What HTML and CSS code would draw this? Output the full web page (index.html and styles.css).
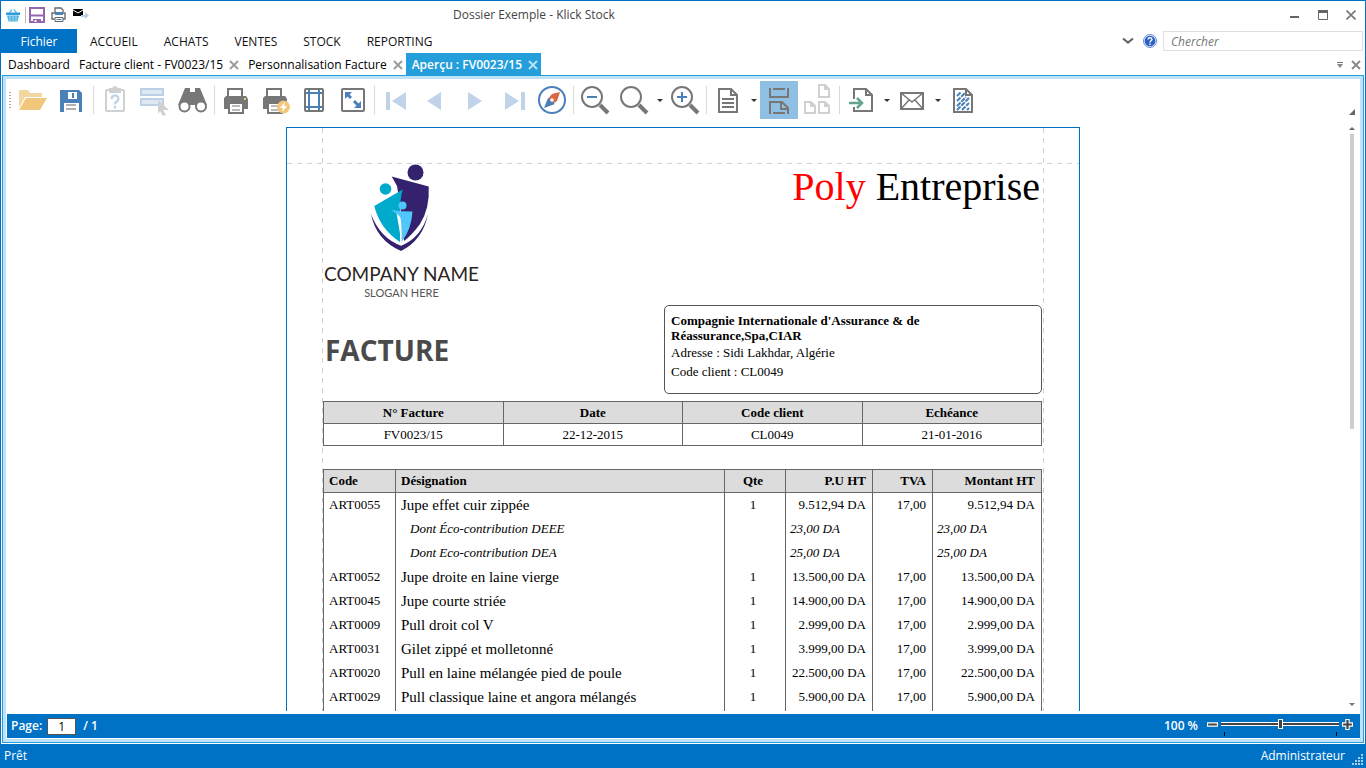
FILE: index.html
```html
<!DOCTYPE html>
<html lang="fr">
<head>
<meta charset="utf-8">
<title>Dossier Exemple - Klick Stock</title>
<link rel="stylesheet" href="styles.css">
</head>
<body>
<div class="window">
  <header class="titlebar">
    <div class="quick">
      <svg class="i14" viewBox="0 0 14 14"><path d="M3.500 5 6 1.500M10.500 5 8 1.500" stroke="#7fc4e8" stroke-width="1.500" fill="none"/><path d="M0 4.500h14V7H0z" fill="#2a9fdb"/><path d="M1 7.500h12l-1.500 6h-9z" fill="#4fb3e2"/><path d="M4 8v5M7 8v5M10 8v5" stroke="#a8d8f0"/></svg>
      <span class="bar"></span>
      <button class="qbtn" aria-label="Enregistrer"><svg class="i16" viewBox="0 0 16 16"><path d="M1 1h14v14H1z" fill="#fff" stroke="#9466ad" stroke-width="2"/><path d="M1 8.500h14" stroke="#9466ad" stroke-width="2"/><path d="M4 12h8v4H4z" fill="#9466ad"/><path d="M5.500 13h2v2h-2z" fill="#fff"/></svg></button>
      <button class="qbtn" aria-label="Imprimer"><svg class="i16" viewBox="0 0 16 16"><path d="M4 5V1h6l2 2v2M3.500 12H1V6h13v6h-2" fill="none" stroke="#666" stroke-width="1.300"/><path d="M4 5h8v3H4z" fill="#4d82b8"/><path d="M4 10.500h8v4H4z" fill="#fff" stroke="#666"/><path d="M5.500 12.500h5" stroke="#4d82b8"/></svg></button>
      <button class="qbtn" aria-label="Envoyer"><svg class="i16" viewBox="0 0 16 16"><path d="M0 2h10v7H0z" fill="#000"/><path d="m0 3 5 3 5-3" stroke="#fff" fill="none"/><path d="M8 8h4V5l4 3.500-4 3.500V10H8z" fill="#b9cfe8"/></svg></button>
    </div>
    <div class="title">Dossier Exemple - Klick Stock</div>
    <div class="winbtns">
      <button aria-label="Réduire"><svg viewBox="0 0 10 10"><path d="M0 7h9" stroke="#666" stroke-width="2"/></svg></button>
      <button aria-label="Agrandir"><svg viewBox="0 0 10 10"><path d="M.5 1v8.500h9V1" fill="none" stroke="#666"/><path d="M0 1.500h10" stroke="#666" stroke-width="3"/></svg></button>
      <button aria-label="Fermer"><svg viewBox="0 0 10 10"><path d="m.5.5 9 9m0-9-9 9" stroke="#777" stroke-width="1.600"/></svg></button>
    </div>
  </header>
  <nav class="menu">
    <button class="file">Fichier</button>
    <div class="items">
      <button>ACCUEIL</button><button>ACHATS</button><button>VENTES</button><button>STOCK</button><button>REPORTING</button>
    </div>
    <div class="search">
      <button aria-label="Réduire le ruban"><svg class="chev" viewBox="0 0 12 8"><path d="m1 1.500 5 4 5-4" fill="none" stroke="#666" stroke-width="2.200"/></svg></button>
      <button aria-label="Aide"><svg class="i14" viewBox="0 0 14 14"><circle cx="7" cy="7" r="6.500" fill="#e3ebf8" stroke="#6d8fd0"/><circle cx="7" cy="7" r="5.300" fill="#2a5fc4"/><path d="M5 5.500Q5.200 3.700 7 3.700T9 5.300Q9 6.300 7.800 7 7 7.500 7 8.500M7 9.500v1.500" stroke="#fff" stroke-width="1.400" fill="none"/></svg></button>
      <input type="text" placeholder="Chercher" aria-label="Chercher">
    </div>
  </nav>
  <div class="tabs">
    <div class="tab"><button>Dashboard</button></div>
    <div class="tab"><button>Facture client - FV0023/15</button><button class="x" aria-label="Fermer l'onglet"><svg viewBox="0 0 10 10"><path d="m1 1 8 8m0-8L1 9" stroke="currentColor" stroke-width="1.800"/></svg></button></div>
    <div class="tab"><button>Personnalisation Facture</button><button class="x" aria-label="Fermer l'onglet"><svg viewBox="0 0 10 10"><path d="m1 1 8 8m0-8L1 9" stroke="currentColor" stroke-width="1.800"/></svg></button></div>
    <div class="tab active"><button>Aperçu : FV0023/15</button><button class="x" aria-label="Fermer l'onglet"><svg viewBox="0 0 10 10"><path d="m1 1 8 8m0-8L1 9" stroke="currentColor" stroke-width="1.800"/></svg></button></div>
    <div class="tabtools">
      <button class="x" aria-label="Liste des onglets"><svg viewBox="0 0 10 10"><path d="M2 2.500h6" stroke="#777"/><path d="M2 4h6L5 8z" fill="#888"/></svg></button>
      <button class="x" aria-label="Fermer"><svg viewBox="0 0 10 10"><path d="m1 1 8 8m0-8L1 9" stroke="#888" stroke-width="1.800"/></svg></button>
    </div>
  </div>
  <main class="frame">
    <div class="toolbar">
      <span class="grip"></span>
      <button class="tb" aria-label="Ouvrir"><svg viewBox="0 0 32 32"><path d="M3 6h9l2 3h12v4H9L3 24z" fill="#f4d6a0"/><path d="M10 14h21l-7 12H3z" fill="#f0c77b"/></svg></button>
      <button class="tb" aria-label="Enregistrer"><svg viewBox="0 0 32 32"><path d="M5 6h19l3 3v19H5z" fill="#4a80b8"/><path d="M13 8h9v7h-9zM9 19h15v9H9z" fill="#fff"/><path d="M17 9h2v5h-2z" fill="#4a80b8"/><path d="M11 21h10M11 25h10" stroke="#b0b0b0" stroke-width="2"/></svg></button>
      <span class="sep"></span>
      <button class="tb" aria-label="Paramètres"><svg viewBox="0 0 32 32"><rect x="8" y="6" width="18" height="21" rx="1" fill="none" stroke="#d0d0d0" stroke-width="2"/><path d="M11 4h3q3-4 6 0h3v5H11z" fill="#d0d0d0"/><path d="M13.500 15q.5-3.500 3.500-3.500t3.500 3q0 2-2 3.200T17 20.500M17 22v2.500" fill="none" stroke="#bcd0e6" stroke-width="2.200"/></svg></button>
      <button class="tb" aria-label="Sélection"><svg viewBox="0 0 32 32"><path d="M4 5h22v6H4zM4 15h22v6H4z" fill="#dfe9f4" stroke="#bcd0e6" stroke-width="2"/><path d="m21 16 11 10h-6l3 5-3 1-3-5-2 3z" fill="#d0d0d0"/></svg></button>
      <button class="tb" aria-label="Rechercher"><svg viewBox="0 0 32 32"><path d="M9 4h5v4h5V4h5l7 17H2z" fill="#777"/><path d="M13 20h7v-5h-7z" fill="#777"/><circle cx="8.500" cy="22.500" r="5" fill="#fff" stroke="#777" stroke-width="2"/><circle cx="25" cy="22.500" r="5" fill="#fff" stroke="#777" stroke-width="2"/></svg></button>
      <span class="sep"></span>
      <button class="tb" aria-label="Imprimer"><svg viewBox="0 0 32 32"><path d="M9 12V5h14v7" fill="none" stroke="#777" stroke-width="2"/><path d="M7 12h20l2 3v10H5V14z" fill="#777"/><path d="M25 14h2v2h-2z" fill="#f0c77b"/><path d="M10 19h14v10H10z" fill="#fff" stroke="#777" stroke-width="2"/><path d="M13 22h8M13 26h8" stroke="#bbb" stroke-width="2"/></svg></button>
      <button class="tb" aria-label="Impression rapide"><svg viewBox="0 0 32 32"><path d="M9 12V5h14v7" fill="none" stroke="#777" stroke-width="2"/><path d="M7 12h20l2 3v10H5V14z" fill="#777"/><path d="M10 19h14v10H10z" fill="#fff" stroke="#777" stroke-width="2"/><path d="M13 22h8M13 26h8" stroke="#bbb" stroke-width="2"/><circle cx="25.500" cy="23" r="6.500" fill="#f0c77b"/><path d="m27 18-5 6h3l-1 4 5-6h-3z" fill="#fff"/></svg></button>
      <button class="tb" aria-label="Marges"><svg viewBox="0 0 32 32"><rect x="8" y="5" width="18" height="22" rx="1" fill="none" stroke="#777" stroke-width="2"/><path d="M12 6v20M22 6v20M9 9h16M9 23h16" stroke="#4a80b8" stroke-width="2"/></svg></button>
      <button class="tb" aria-label="Échelle"><svg viewBox="0 0 32 32"><rect x="6" y="5" width="22" height="22" rx="1" fill="none" stroke="#777" stroke-width="2"/><path d="m10 9 5 5M18 17l5 5" stroke="#4a80b8" stroke-width="3"/><path d="M9 8h7l-7 7zM25 24h-7l7-7z" fill="#4a80b8"/></svg></button>
      <span class="sep"></span>
      <button class="tb" aria-label="Première page"><svg viewBox="0 0 32 32"><path d="M7 8h4v18H7zM27 8v18l-14-9z" fill="#c0d3e8"/></svg></button>
      <button class="tb" aria-label="Page précédente"><svg viewBox="0 0 32 32"><path d="M23 8v18L9 17z" fill="#c0d3e8"/></svg></button>
      <button class="tb" aria-label="Page suivante"><svg viewBox="0 0 32 32"><path d="M11 8v18l14-9z" fill="#c0d3e8"/></svg></button>
      <button class="tb" aria-label="Dernière page"><svg viewBox="0 0 32 32"><path d="M9 8v18l14-9zM25 8h4v18h-4z" fill="#c0d3e8"/></svg></button>
      <button class="tb" aria-label="Navigation"><svg viewBox="0 0 32 32"><circle cx="17" cy="16" r="13" fill="#fff" stroke="#4a80b8" stroke-width="2"/><path d="m25 8-3 9-5 3-4-5 4-5z" fill="#db6544"/><path d="m9 24 4-10 7 6z" fill="#4a80b8"/><circle cx="17" cy="16" r="1.800" fill="#fff"/></svg></button>
      <span class="sep"></span>
      <button class="tb" aria-label="Zoom arrière"><svg viewBox="0 0 32 32"><circle cx="14" cy="13" r="10" fill="none" stroke="#777" stroke-width="2"/><path d="m22 21 8 8" stroke="#777" stroke-width="4"/><path d="M9 13h10" stroke="#4a80b8" stroke-width="2"/></svg></button>
      <button class="tb" aria-label="Zoom"><svg viewBox="0 0 32 32"><circle cx="14" cy="13" r="10" fill="none" stroke="#777" stroke-width="2"/><path d="m22 21 8 8" stroke="#777" stroke-width="4"/></svg></button>
      <button class="caret" aria-label="Niveaux de zoom"></button>
      <button class="tb" aria-label="Zoom avant"><svg viewBox="0 0 32 32"><circle cx="14" cy="13" r="10" fill="none" stroke="#777" stroke-width="2"/><path d="m22 21 8 8" stroke="#777" stroke-width="4"/><path d="M9 13h10M14 8v10" stroke="#4a80b8" stroke-width="2"/></svg></button>
      <span class="sep"></span>
      <button class="tb" aria-label="Affichage"><svg viewBox="0 0 32 32"><path d="M8 5h12l6 6v17H8zM20 5v6h6" fill="none" stroke="#777" stroke-width="2"/><path d="M11 15h12M11 19h12M11 23h12" stroke="#777" stroke-width="2"/></svg></button>
      <button class="caret" aria-label="Options d'affichage"></button>
      <button class="tb on" aria-label="Défilement continu"><svg viewBox="0 0 32 32"><path d="M8 4v9h18V4M11 5h12M8 30V18h12l6 6v6M19 18v7h7M11 29h12" fill="none" stroke="#777" stroke-width="2"/></svg></button>
      <button class="tb" aria-label="Plusieurs pages"><svg viewBox="0 0 32 32"><path d="M18 1h6l4 4v8H18zM24 1v4h4M4 18h6l4 4v7H4zM10 18v4h4M18 18h6l4 4v7H18zM24 18v4h4" fill="none" stroke="#d0d0d0" stroke-width="2"/></svg></button>
      <span class="sep"></span>
      <button class="tb" aria-label="Exporter"><svg viewBox="0 0 32 32"><path d="M10 15V5h12l6 6v16H10v-4M22 5v6h6" fill="none" stroke="#777" stroke-width="2"/><path d="M5 19h12M13 14l5 5-5 5" fill="none" stroke="#63a68d" stroke-width="2.500"/></svg></button>
      <button class="caret" aria-label="Formats d'export"></button>
      <button class="tb" aria-label="Envoyer par e-mail"><svg viewBox="0 0 32 32"><path d="M6 9h22v16H6z" fill="none" stroke="#777" stroke-width="2"/><path d="m6 9 11 9 11-9M6 25l8-9M28 25l-8-9" fill="none" stroke="#777" stroke-width="1.500"/></svg></button>
      <button class="caret" aria-label="Formats d'envoi"></button>
      <button class="tb" aria-label="Filigrane"><svg viewBox="0 0 32 32"><path d="M8 5h12l6 6v17H8zM20 5v6h6" fill="none" stroke="#777" stroke-width="2"/><path d="m11 12 4-4M11 17l8-8M11 22l9-9M11 26l12-12M16 26l7-7M21 26l2-2" stroke="#4a80b8" stroke-width="2" stroke-dasharray="5 1"/></svg></button>
      <span class="corner"></span>
    </div>
    <div class="viewer">
      <article class="page">
        <div class="head">
          <div class="logo">
            <svg viewBox="0 0 60 88"><circle cx="44.500" cy="8.500" r="8" fill="#35226f"/><path d="M20.700 12.500 57.700 22.500Q59 44 49 60 41 71 33 77L29 40 26 22Z" fill="#35226f"/><path d="m3.300 42 28.400-16.500Q29 34 29 50v28Q9 65 3.300 42Z" fill="#00aacb"/><circle cx="14.500" cy="25" r="5.800" fill="#00aacb"/><path d="m25.500 49 5 29 3-29z" fill="#fff"/><circle cx="31.500" cy="41.500" r="4" fill="#4fc7fb"/><path d="M19.500 46q10 1.500 22 1.500-1 18-11 30.500.500-15-1-24-3-5-10-8Z" fill="#4fc7fb"/><path d="M0 50Q9 74 30 81.700 50 74 57 50 52 76 30 87 5 76 0 50Z" fill="#35226f"/></svg>
            <div class="company">COMPANY NAME</div>
            <div class="slogan">SLOGAN HERE</div>
          </div>
          <h1><span>Poly</span> Entreprise</h1>
        </div>
        <div class="party">
          <h2>FACTURE</h2>
          <address><strong>Compagnie Internationale d'Assurance &amp; de<br>Réassurance,Spa,CIAR</strong><div>Adresse : Sidi Lakhdar, Algérie</div><div>Code client : CL0049</div></address>
        </div>
        <table class="meta">
          <thead><tr><th>N° Facture</th><th>Date</th><th>Code client</th><th>Echéance</th></tr></thead>
          <tbody><tr><td>FV0023/15</td><td>22-12-2015</td><td>CL0049</td><td>21-01-2016</td></tr></tbody>
        </table>
        <table class="lines">
          <colgroup><col class="c1"><col><col class="c3"><col class="c4"><col class="c5"><col class="c6"></colgroup>
          <thead><tr><th>Code</th><th>Désignation</th><th>Qte</th><th>P.U HT</th><th>TVA</th><th>Montant HT</th></tr></thead>
          <tbody>
            <tr><td>ART0055</td><td>Jupe effet cuir zippée</td><td>1</td><td>9.512,94 DA</td><td>17,00</td><td>9.512,94 DA</td></tr>
            <tr class="sub"><td></td><td>Dont Éco-contribution DEEE</td><td></td><td>23,00 DA</td><td></td><td>23,00 DA</td></tr>
            <tr class="sub"><td></td><td>Dont Eco-contribution DEA</td><td></td><td>25,00 DA</td><td></td><td>25,00 DA</td></tr>
            <tr><td>ART0052</td><td>Jupe droite en laine vierge</td><td>1</td><td>13.500,00 DA</td><td>17,00</td><td>13.500,00 DA</td></tr>
            <tr><td>ART0045</td><td>Jupe courte striée</td><td>1</td><td>14.900,00 DA</td><td>17,00</td><td>14.900,00 DA</td></tr>
            <tr><td>ART0009</td><td>Pull droit col V</td><td>1</td><td>2.999,00 DA</td><td>17,00</td><td>2.999,00 DA</td></tr>
            <tr><td>ART0031</td><td>Gilet zippé et molletonné</td><td>1</td><td>3.999,00 DA</td><td>17,00</td><td>3.999,00 DA</td></tr>
            <tr><td>ART0020</td><td>Pull en laine mélangée pied de poule</td><td>1</td><td>22.500,00 DA</td><td>17,00</td><td>22.500,00 DA</td></tr>
            <tr><td>ART0029</td><td>Pull classique laine et angora mélangés</td><td>1</td><td>5.900,00 DA</td><td>17,00</td><td>5.900,00 DA</td></tr>
            <tr class="rest"><td></td><td></td><td></td><td></td><td></td><td></td></tr>
          </tbody>
        </table>
      </article>
      <div class="scroll"><span class="up"></span><span class="thumb"></span><span class="down"></span></div>
    </div>
    <div class="pagebar">
      <label for="pg">Page:</label><input id="pg" type="text" value="1"><span>/ 1</span>
      <label for="zoom" class="pct">100 %</label>
      <button aria-label="Zoom arrière"><svg viewBox="0 0 10 10"><path d="M.5 3.500h9v3h-9z" fill="#444" stroke="#fff"/></svg></button>
      <input id="zoom" type="range" min="0" max="100" value="50">
      <button aria-label="Zoom avant"><svg viewBox="0 0 10 10"><path d="M3.500.5h3v3h3v3h-3v3h-3v-3h-3v-3h3z" fill="#444" stroke="#fff"/></svg></button>
    </div>
  </main>
  <footer class="status"><span>Prêt</span><span class="user">Administrateur</span><svg class="sizegrip" viewBox="0 0 12 12"><path d="M9 0h2v2H9zM6 3h2v2H6zM9 3h2v2H9zM3 6h2v2H3zM6 6h2v2H6zM9 6h2v2H9zM0 9h2v2H0zM3 9h2v2H3zM6 9h2v2H6zM9 9h2v2H9z" fill="#a9cdea"/></svg></footer>
</div>
</body>
</html>
```
FILE: styles.css
```css
* { box-sizing: border-box; }
body { margin: 0; font: 12px/16px "Open Sans", "Noto Sans", sans-serif; color: #111; }
button { border: 0; padding: 0; background: none; font: inherit; color: inherit; }
svg { display: block; flex: none; }
.window { height: 100vh; display: flex; flex-direction: column; border: 1px solid #0072c6; border-bottom: 0; overflow: hidden; background: #fff; }

.titlebar { height: 28px; flex: none; display: grid; grid-template-columns: 452px 1fr auto; align-items: center; }
.quick { display: flex; align-items: center; padding-left: 5px; }
.quick .bar { width: 1px; height: 16px; background: #bbb; margin: 0 3px 0 5px; }
.qbtn { margin-right: 6px; }
.i14 { width: 14px; height: 14px; }
.i16 { width: 16px; height: 16px; }
.title { color: #444; }
.winbtns { display: flex; justify-content: flex-end; gap: 18px; padding-right: 9px; }
.winbtns svg { width: 10px; height: 10px; }

.menu { height: 24px; flex: none; display: flex; align-items: center; }
.file { width: 76px; height: 24px; padding-top: 1px; background: #0072c6; color: #fff; }
.items { display: flex; gap: 26px; padding: 1px 0 0 13px; }
.search { margin-left: auto; display: flex; align-items: center; gap: 9px; padding-right: 2px; }
.search input { width: 200px; height: 20px; border: 1px solid #e0e0e0; margin-left: -3px; padding: 1px 7px 0; font: italic 12px "Open Sans", sans-serif; }
.search input::placeholder { color: #777; }
.chev { width: 12px; height: 8px; }

.tabs { height: 22px; flex: none; display: flex; padding-left: 1px; font-weight: 500; color: #000; }
.tab { display: flex; align-items: center; gap: 6px; padding: 2px 3px 0 6px; height: 22px; }
.tab .x { color: #999; }
.x svg { width: 10px; height: 10px; }
.active { background: #259fdb; color: #fff; font-weight: 600; }
.tab.active .x { color: #bde3f7; }
.tabtools { margin-left: auto; display: flex; gap: 6px; padding: 2px 4px 0 0; align-items: center; }

.frame { flex: 1; min-height: 0; margin: 0 1px 1px; border: 1px solid #259fdb; box-shadow: inset 0 0 0 3px #bfe2f6; padding: 3px; display: flex; flex-direction: column; }
.toolbar { height: 45px; flex: none; display: flex; align-items: center; padding: 0 0 3px 3px; }
.grip { width: 2px; height: 16px; margin: 0 3px 0 0; background: repeating-linear-gradient(#aaa 0 1px, #fff 1px 3px); }
.tb { width: 38px; height: 38px; margin-right: 1px; padding-left: 2px; flex: none; }
.tb svg { width: 32px; height: 32px; }
.on { background: #90bfe4; }
.sep { width: 1px; height: 28px; margin: 0 2px 0 1px; background: #d8d8d8; flex: none; }
.caret { width: 12px; height: 38px; flex: none; display: flex; align-items: center; justify-content: center; }
.caret::before { content: ""; border: 3px solid transparent; border-top-color: #333; border-bottom: 0; }
.corner { margin: 24px 5px 0 auto; border-left: 6px solid transparent; border-bottom: 6px solid #666; }

.viewer { flex: 1; min-height: 0; overflow: hidden; display: grid; grid-template-columns: 1fr 794px 1fr; grid-template-rows: minmax(0, 1fr); padding-top: 3px; margin-bottom: 3px; }
.page { grid-column: 2; height: 1123px; border: 1px solid #0072c6; padding: 36px 37px 36px 36px; font: 14px/16px "Liberation Serif", serif; color: #000;
  background:
    repeating-linear-gradient(#d0d0d0 0 5px, transparent 5px 10px) 35px 0 / 1px 100% no-repeat,
    repeating-linear-gradient(#d0d0d0 0 5px, transparent 5px 10px) 756px 0 / 1px 100% no-repeat,
    repeating-linear-gradient(90deg, #d0d0d0 0 5px, transparent 5px 10px) 0 35px / 100% 1px no-repeat; }
.head { display: flex; justify-content: space-between; height: 141px; }
.logo { width: 157px; text-align: center; white-space: nowrap; font-family: Lato, sans-serif; }
.logo svg { width: 60px; height: 88px; margin: 0 auto 9px 48px; }
.company { font-size: 19px; line-height: 25px; color: #2b2421; }
.slogan { font-size: 11px; line-height: 14px; color: #555; }
h1 { margin: 0; padding-right: 2px; font: 40px/46px "Liberation Serif", serif; }
h1 span { color: #f00; }
.party { display: flex; justify-content: space-between; }
h2 { margin: 25px 0 0 2px; font: bold 28px/40px "Open Sans", sans-serif; color: #4a4a4a; }
address { width: 378px; height: 89px; border: 1px solid #555; border-radius: 5px; padding: 7px 6px; font-style: normal; font-size: 13px; }
address strong { display: block; line-height: 15px; }
address div { line-height: 19px; }
table { width: 100%; border-collapse: collapse; table-layout: fixed; }
th { background: #dcdcdc; }
.meta { margin-top: 7px; text-align: center; font-size: 13px; }
.meta th, .meta td { border: 1px solid #666; height: 22px; padding: 0; }
.lines { margin-top: 23px; font-size: 13px; }
.lines thead tr { height: 23px; border: 1px solid #666; }
.lines tbody tr { height: 24px; }
.lines th, .lines td { border: 1px solid #666; border-top: 0; border-bottom: 0; padding: 0 6px 0 4px; text-align: left; }
.lines :is(th, td):nth-child(-n+2) { padding-left: 5px; }
.lines :is(th, td):nth-child(3) { text-align: center; padding-left: 0; padding-right: 4px; }
.lines :is(th, td):nth-child(n+4) { text-align: right; }
.lines td:nth-child(2) { font-size: 15px; }
.lines .sub td { font-style: italic; text-align: left; font-size: 13px; }
.lines .sub td:nth-child(2) { padding-left: 14px; }
.lines .rest { height: 300px; }
.c1 { width: 72px; } .c3 { width: 61px; } .c4 { width: 87px; } .c5 { width: 60px; } .c6 { width: 109px; }
.scroll { grid-column: 3; justify-self: end; padding: 0 5px 5px 0; display: flex; flex-direction: column; align-items: center; }
.up { border: 3px solid transparent; border-top: 0; border-bottom-color: #666; margin-bottom: 4px; }
.thumb { width: 4px; flex: 0 0 51%; background: #cdcdcd; }
.down { border: 3px solid transparent; border-bottom: 0; border-top-color: #777; margin-top: auto; }

.pagebar { height: 24px; flex: none; margin: 0 0 1px 1px; background: #0072c6; color: #fff; display: flex; align-items: center; padding: 0 7px 0 4px; font-weight: 600; }
.pagebar #pg { width: 29px; height: 17px; margin: 0 7px 0 5px; border: 1px solid #555; padding: 0; text-align: center; font: 12px "Open Sans", sans-serif; }
.pct { margin-left: auto; padding-right: 9px; }
.pagebar svg { width: 11px; height: 11px; margin-bottom: 4px; }
#zoom { appearance: none; width: 118px; height: 24px; margin: 0 3px; padding-bottom: 4px; background: linear-gradient(#000, #000) 3px 18px / 1px 4px no-repeat, linear-gradient(#000, #000) 115px 18px / 1px 4px no-repeat; }
#zoom::-webkit-slider-runnable-track { height: 4px; background: #444; border: 1px solid #fff; border-width: 1px 0; }
#zoom::-webkit-slider-thumb { appearance: none; width: 5px; height: 10px; margin-top: -4px; background: #444; border: 1px solid #fff; }
.status { height: 24px; flex: none; margin: 0 -1px; background: #0072c6; color: #fff; display: flex; align-items: center; padding: 0 2px 0 4px; }
.user { margin-left: auto; padding-right: 7px; }
.sizegrip { width: 12px; height: 12px; margin-top: 8px; }
```
